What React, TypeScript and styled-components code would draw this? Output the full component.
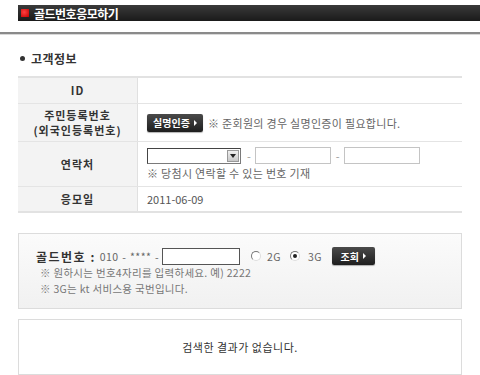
import React from "react";
import styled, { createGlobalStyle } from "styled-components";

const Global = createGlobalStyle`
  html, body { margin: 0; padding: 0; background: #fff; }
  body { font-family: "Noto Sans CJK KR", "Noto Sans", sans-serif; color: #444; width: 480px; overflow: hidden; }
`;

const Page = styled.div`
  width: 480px;
  padding-top: 5px;
`;

const TitleBar = styled.div`
  margin-left: 18px;
  height: 16px;
  background: linear-gradient(#3a3a3a, #1a1a1a);
  display: flex;
  align-items: center;
  gap: 5px;
  padding-left: 3px;
  color: #fff;
  font-weight: 700;
  font-size: 12px;
  letter-spacing: -0.5px;
`;

const RedMark = styled.span`
  width: 8px;
  height: 8px;
  background: radial-gradient(circle at 40% 40%, #ff4040, #c00000);
  display: inline-block;
`;

const Rule = styled.div`
  margin-top: 11px;
  height: 2px;
  background: #8a8a8a;
  border-bottom: 1px solid #d8d8d8;
`;

const Section = styled.div`
  padding: 0 18px;
  width: 444px;
`;

const SectionTitle = styled.div`
  display: flex;
  align-items: center;
  gap: 6px;
  height: 16px;
  margin-top: 15px;
  font-size: 12px;
  font-weight: 700;
  color: #333;
  letter-spacing: 0.5px;
`;

const Dot = styled.span`
  width: 5px;
  height: 5px;
  border-radius: 50%;
  background: #333;
  margin-left: 2px;
`;

const Table = styled.div`
  margin-top: 10px;
  border-top: 2px solid #e2e2e2;
  border-bottom: 2px solid #e2e2e2;
`;

const Row = styled.div<{ $h: number }>`
  display: grid;
  grid-template-columns: 120px 1fr;
  height: ${(p) => p.$h}px;
  border-top: 1px solid #e4e4e4;
  &:first-child { border-top: none; }
`;

const Label = styled.div`
  background: #f3f3f3;
  border-right: 1px solid #e0e0e0;
  display: flex;
  align-items: center;
  justify-content: center;
  text-align: center;
  font-size: 11px;
  font-weight: 700;
  color: #333;
  letter-spacing: 1px;
  line-height: 15px;
`;

const Cell = styled.div`
  display: flex;
  flex-direction: column;
  justify-content: center;
  padding-left: 9px;
  font-size: 11px;
  color: #555;
  gap: 1px;
`;

const Line = styled.div`
  display: flex;
  align-items: center;
`;

const Gap = styled.span<{ $w: number }>`
  flex: none;
  width: ${(p) => p.$w}px;
`;

const DarkButton = styled.span<{ $w: number }>`
  display: inline-flex;
  align-items: center;
  justify-content: center;
  gap: 4px;
  width: ${(p) => p.$w}px;
  height: 18px;
  background: linear-gradient(#4a4a4a, #1e1e1e);
  border-radius: 2px;
  color: #fff;
  font-size: 10px;
  font-weight: 700;
  box-shadow: 0 1px 1px rgba(0,0,0,0.3);
  &::after {
    content: "";
    border-left: 3px solid #fff;
    border-top: 3px solid transparent;
    border-bottom: 3px solid transparent;
  }
`;

const Note = styled.span`
  font-size: 11px;
  color: #666;
  letter-spacing: 0.3px;
`;

const Select = styled.div`
  width: 92px;
  height: 14px;
  border: 1px solid #7a7a7a;
  border-top-color: #444;
  border-left-color: #444;
  display: flex;
  justify-content: flex-end;
  background: #fff;
`;

const SelectArrow = styled.div`
  width: 12px;
  height: 12px;
  margin: 1px;
  background: linear-gradient(#f0f0f0, #c8c8c8);
  border: 1px solid #999;
  box-sizing: border-box;
  display: flex;
  align-items: center;
  justify-content: center;
  &::after {
    content: "";
    border-top: 4px solid #222;
    border-left: 3px solid transparent;
    border-right: 3px solid transparent;
  }
`;

const Dash = styled.span`
  color: #999;
  font-size: 11px;
`;

const Input = styled.div<{ $w: number; $dark?: boolean }>`
  width: ${(p) => p.$w}px;
  height: 15px;
  border: 1px solid ${(p) => (p.$dark ? "#555" : "#c4c4c4")};
  background: #fff;
`;

const GoldBox = styled.div`
  margin-top: 20px;
  height: 76px;
  border: 1px solid #dcdcdc;
  background: linear-gradient(#fbfbfb, #f1f1f1);
  padding: 13px 0 0 17px;
  box-sizing: border-box;
  font-size: 11px;
  color: #666;
`;

const GoldLabel = styled.span`
  font-size: 12px;
  font-weight: 700;
  color: #333;
  letter-spacing: 1.5px;
`;

const Small = styled.span`
  font-size: 10.5px;
  color: #666;
  letter-spacing: 0.4px;
  word-spacing: 1px;
`;

const Radio = styled.span<{ $on?: boolean }>`
  width: 8px;
  height: 8px;
  border-radius: 50%;
  border: 1px solid #777;
  border-right-color: #ddd;
  border-bottom-color: #ddd;
  background: #fff;
  display: inline-flex;
  align-items: center;
  justify-content: center;
  &::after {
    content: "";
    width: 4px;
    height: 4px;
    border-radius: 50%;
    background: ${(p) => (p.$on ? "#222" : "transparent")};
  }
`;

const GNote = styled.div`
  padding-left: 4px;
  font-size: 10.5px;
  color: #777;
  line-height: 16px;
  letter-spacing: 0.3px;
`;

const ResultBox = styled.div`
  margin-top: 10px;
  height: 54px;
  border: 1px solid #dcdcdc;
  display: flex;
  align-items: center;
  justify-content: center;
  font-size: 11px;
  color: #333;
  letter-spacing: 0.5px;
`;

export default function App() {
  return (
    <Page>
      <Global />
      <TitleBar>
        <RedMark />
        골드번호응모하기
      </TitleBar>
      <Rule />
      <Section>
        <SectionTitle>
          <Dot />
          고객정보
        </SectionTitle>
        <Table>
          <Row $h={25}>
            <Label>ID</Label>
            <Cell />
          </Row>
          <Row $h={37}>
            <Label>
              주민등록번호
              <br />
              (외국인등록번호)
            </Label>
            <Cell>
              <Line>
                <DarkButton $w={56}>실명인증</DarkButton>
                <Gap $w={5} />
                <Note>※ 준회원의 경우 실명인증이 필요합니다.</Note>
              </Line>
            </Cell>
          </Row>
          <Row $h={44}>
            <Label>연락처</Label>
            <Cell>
              <Line>
                <Select>
                  <SelectArrow />
                </Select>
                <Gap $w={6} />
                <Dash>-</Dash>
                <Gap $w={4} />
                <Input $w={74} />
                <Gap $w={5} />
                <Dash>-</Dash>
                <Gap $w={4} />
                <Input $w={74} />
              </Line>
              <Note>※ 당첨시 연락할 수 있는 번호 기재</Note>
            </Cell>
          </Row>
          <Row $h={24}>
            <Label>응모일</Label>
            <Cell>2011-06-09</Cell>
          </Row>
        </Table>
        <GoldBox>
          <Line>
            <GoldLabel>골드번호 :</GoldLabel>
            <Gap $w={4} />
            <Small>010 - **** -</Small>
            <Gap $w={3} />
            <Input $w={76} $dark />
            <Gap $w={11} />
            <Radio />
            <Gap $w={6} />
            <Small>2G</Small>
            <Gap $w={9} />
            <Radio $on />
            <Gap $w={8} />
            <Small>3G</Small>
            <Gap $w={10} />
            <DarkButton $w={43}>조회</DarkButton>
          </Line>
          <GNote>※ 원하시는 번호4자리를 입력하세요. 예) 2222</GNote>
          <GNote>※ 3G는 kt 서비스용 국번입니다.</GNote>
        </GoldBox>
        <ResultBox>검색한 결과가 없습니다.</ResultBox>
      </Section>
    </Page>
  );
}
